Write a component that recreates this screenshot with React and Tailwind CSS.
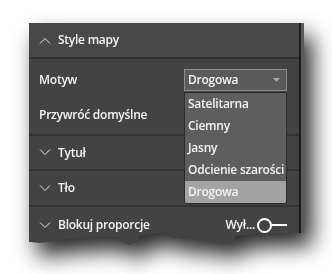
import React from 'react';

const font = { fontFamily: '"Open Sans", "Noto Sans", sans-serif' };

// thin chevron used in the section headers
const Chevron = ({ up }) => (
  <svg width="12" height="7" viewBox="0 0 12 7" className="shrink-0">
    <polyline
      points={up ? '1,6.5 6,1.5 11,6.5' : '1,0.5 6,5.5 11,0.5'}
      fill="none"
      stroke="#e6e6e6"
      strokeWidth="1"
    />
  </svg>
);

const label = 'text-[12px] font-semibold text-[#f4f4f4] leading-none whitespace-nowrap tracking-[-0.25px]';

const Section = ({ title, h, children, last }) => (
  <div
    className={`flex items-center pl-[10px] pr-[12px] gap-[7px] ${h} ${last ? '' : 'border-b-2 border-[#323232]'}`}
  >
    <Chevron />
    <span className={label}>{title}</span>
    {children}
  </div>
);

const options = ['Satelitarna', 'Ciemny', 'Jasny', 'Odcienie szarości', 'Drogowa'];

export default function App() {
  return (
    <div className="w-[332px] h-[274px] bg-white pt-[23px] pl-[29px] overflow-hidden" style={font}>
      <div className="w-[275px] [filter:drop-shadow(8px_13px_11px_rgba(0,0,0,0.85))]">
        <div className="relative flex w-[275px] h-[222px] bg-[#434343] [clip-path:polygon(0_0,275px_0,275px_210px,261px_210px,224px_211px,207px_213px,205px_220px,184px_220px,181px_217px,143px_215px,139px_209px,131px_210px,111px_213px,108px_219px,101px_222px,93px_219px,89px_214px,74px_214px,38px_216px,24px_218px,11px_220px,1px_219px,0_219px)]">
          <div className="flex-1 flex flex-col">
            {/* header */}
            <div className="flex items-center h-[36px] pl-[10px] gap-[7px] bg-[#484848] border-b-2 border-[#323232]">
              <Chevron up />
              <span className={label}>Style mapy</span>
            </div>

            {/* body */}
            <div className="flex flex-col h-[77px] border-b-2 border-[#323232] pl-[10px]">
              <div className="flex items-center justify-between h-[40px] pt-[4px] pr-[12px]">
                <span className={label}>Motyw</span>
                <div className="flex items-center justify-between w-[103px] h-[22px] bg-[#5a5a5a] border border-[#8e8e8e] pl-[3px] pr-[6px]">
                  <span className={label}>Drogowa</span>
                  <svg width="7" height="4" viewBox="0 0 7 4">
                    <polygon points="0,0 7,0 3.5,4" fill="#a8a8a8" />
                  </svg>
                </div>
              </div>
              <div className="flex items-center h-[37px] pb-[2px]">
                <span className={label}>Przywróć domyślne</span>
              </div>
            </div>

            <Section title="Tytuł" h="h-[35px]" />
            <Section title="Tło" h="h-[36px]" />
            <Section title="Blokuj proporcje" h="h-[36px]" last>
              <div className="ml-auto flex items-center">
                <span className={`${label} mr-[2px]`}>Wył...</span>
                <div className="w-[15px] h-[15px] rounded-full border-2 border-white bg-[#434343]" />
                <div className="w-[15px] h-[2px] bg-white" />
              </div>
            </Section>
          </div>
          <div className="w-[2px] bg-[#1c1c1c]" />
          <div className="w-[3px] bg-[#5a5a5a]" />

          {/* open dropdown list */}
          <div className="absolute left-[155px] top-[69px] w-[103px] flex flex-col bg-[#5e5e5e] border border-[#2c2c2c] rounded-b-[3px]">
            {options.map((o, i) => (
              <div
                key={o}
                className={`flex items-center h-[22px] pl-[3px] ${label} ${i === options.length - 1 ? 'bg-[#a3a3a3] rounded-b-[2px]' : ''}`}
              >
                {o}
              </div>
            ))}
          </div>
        </div>
      </div>
    </div>
  );
}
